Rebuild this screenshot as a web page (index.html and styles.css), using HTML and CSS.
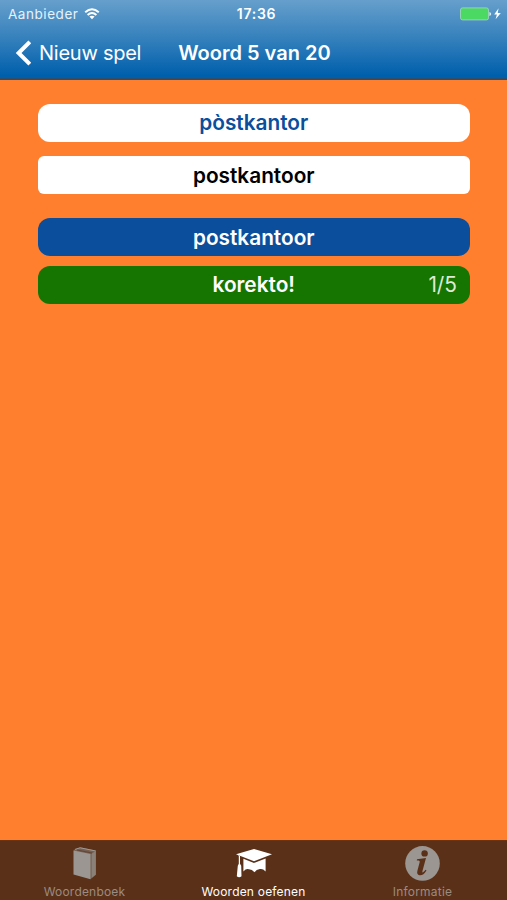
FILE: index.html
```html
<!DOCTYPE html>
<html lang="nl">
<head>
  <meta charset="UTF-8" />
  <meta name="viewport" content="width=device-width, initial-scale=1.0" />
  <title>Woorden oefenen</title>
  <link rel="stylesheet" href="styles.css">
</head>
<body>
  <header>
    <div class="status">
      <div class="carrier">
        <span>Aanbieder</span>
        <svg class="wifi" width="16" height="12" viewBox="0 0 16 12">
          <path d="M1.2 4.2Q8-1.6 14.8 4.2M3.6 6.9Q8 3.2 12.4 6.9" fill="none" stroke="currentColor" stroke-width="2" />
          <path d="M8 11.3L5.4 8.6Q8 6.8 10.6 8.6Z" fill="currentColor" />
        </svg>
      </div>
      <span class="time">17:36</span>
      <div class="power">
        <svg width="42" height="14" viewBox="0 0 42 14">
          <rect x=".5" y=".9" width="28" height="12" rx="2" fill="#4bd964" stroke="#9dd5bd" stroke-width=".9" />
          <path d="M29.4 5Q31.2 5.4 31.2 7T29.4 9Z" fill="#d8ecf5" />
          <path d="M38.6 1.3L34.2 7.5H36.9L35.6 12.3L40.8 6.1H37.7Z" fill="#fff" />
        </svg>
      </div>
    </div>
    <nav class="navbar">
      <a class="back" href="#">
        <svg width="17" height="26" viewBox="0 0 17 26">
          <path d="M15.8 1.9L4.6 13L15.8 24.1" fill="none" stroke="currentColor" stroke-width="4" />
        </svg>
        <span>Nieuw spel</span>
      </a>
      <h1>Woord 5 van 20</h1>
    </nav>
  </header>

  <main>
    <div class="word question">pòstkantor</div>
    <div class="word answer">postkantoor</div>
    <div class="word solution">postkantoor</div>
    <div class="word result">
      <span>korekto!</span>
      <span class="score">1/5</span>
    </div>
  </main>

  <footer>
    <a class="tab" href="#">
      <svg width="36" height="36" viewBox="0 0 36 36">
        <path d="M6.5 4L13 1.2L29 4.4V28.8L23.5 33.2Z" fill="#756052" />
        <path d="M6.5 4.5L23.5 8V33.2L6.5 28.4Z" fill="#9b9692" />
        <path d="M8 3.4L13.2 1.8L28.7 5" fill="none" stroke="#a09a95" stroke-width="1" />
        <path d="M24.6 7.8L28.8 5V28.6L24.6 32Z" fill="#8c8179" />
        <path d="M10 4L25 7" stroke="#624536" stroke-width="1.2" />
      </svg>
      <span>Woordenboek</span>
    </a>
    <a class="tab active" href="#">
      <svg width="36" height="36" viewBox="0 0 36 36">
        <path d="M0 8.2L18 3L36 8.2L18 15.2Z" fill="#fff" />
        <path d="M7.4 12.8L18 16.9L29.6 12.4V25.4Q26.5 22.2 23.8 23.1Q20.3 23.6 18.5 26.2Q16 23.3 13 23.3Q10.4 22 7.4 25.4Z" fill="#fff" />
        <path d="M1.7 8.8L4 9.8V17.8L5.2 19.8L5.5 30.3Q3.1 32 .8 30.3L1.8 19.8L2.8 17.8V9.8Z" fill="#fff" />
      </svg>
      <span>Woorden oefenen</span>
    </a>
    <a class="tab" href="#">
      <svg width="36" height="36" viewBox="0 0 36 36">
        <circle cx="17.5" cy="17.4" r="17.3" fill="#9b9692" />
        <circle cx="19.6" cy="7.4" r="3.2" fill="#5a3018" />
        <path d="M12 13.3L21 12L17.4 25.2Q17.2 26.8 18.1 26.3Q19.2 25.7 20.6 23.8L21.5 24.5Q18.2 29.8 14.5 29.3Q11.4 28.6 12.4 24.7L14.6 16.5Q15.2 14.4 13.6 14.4H11.8Z" fill="#5a3018" />
      </svg>
      <span>Informatie</span>
    </a>
  </footer>
</body>
</html>
```
FILE: styles.css
```css
* {
  box-sizing: border-box;
}
body {
  font-family: Inter, sans-serif;
  background-color: #ff7f2e;
  margin: 0;
  height: 900px;
  display: flex;
  flex-direction: column;
  overflow: hidden;
}
a {
  color: inherit;
  text-decoration: none;
}
svg {
  display: block;
  flex: none;
}
header {
  height: 80px;
  color: white;
  background: linear-gradient(#669fcc, #3480bc 50%, #005fac 97%);
  border-bottom: 2px solid #294f72;
}
.status {
  height: 27px;
  padding: 0 5px 0 8px;
  display: grid;
  grid-template-columns: 1fr auto 1fr;
  align-items: center;
  font-size: 13.5px;
}
.carrier {
  display: flex;
  align-items: center;
  gap: 6px;
  color: #e7f2fa;
  letter-spacing: 0.55px;
}
.wifi {
  color: white;
}
.time {
  padding-left: 3px;
  font-size: 14px;
  font-weight: 600;
  letter-spacing: 0.7px;
}
.power {
  justify-self: end;
}
.navbar {
  height: 51px;
  padding-left: 14px;
  display: flex;
  align-items: center;
  gap: 37px;
  font-size: 20px;
}
.back {
  display: flex;
  align-items: center;
  gap: 8px;
  letter-spacing: -0.25px;
}
h1 {
  margin: 0;
  font-size: 20px;
  font-weight: 600;
  white-space: nowrap;
}
main {
  flex: 1;
  padding: 23.5px 37px 0 37.5px;
}
.word {
  height: 38px;
  border-radius: 12px;
  display: grid;
  place-items: center;
  font-size: 20.8px;
  font-weight: 600;
  color: white;
}
.question {
  background: white;
  color: #0a4e9c;
}
.answer {
  margin-top: 14.5px;
  background: white;
  color: black;
  border-radius: 6px;
}
.solution {
  margin-top: 24.2px;
  background: #0a4e9c;
}
.result {
  margin-top: 9.8px;
  padding: 0 13px;
  grid-template-columns: 1fr auto 1fr;
  background: #157500;
}
.result span:first-child {
  grid-column: 2;
}
.score {
  justify-self: end;
  font-weight: 400;
  color: #dcebd9;
}
footer {
  height: 60px;
  padding-top: 5px;
  display: grid;
  grid-template-columns: repeat(3, 1fr);
  background: #5a3018;
  border-top: 1px solid #6b3515;
}
.tab {
  display: flex;
  flex-direction: column;
  align-items: center;
  color: #9b8b80;
  font-size: 12px;
  line-height: 20px;
  letter-spacing: 0.2px;
}
.active {
  color: white;
}
```
